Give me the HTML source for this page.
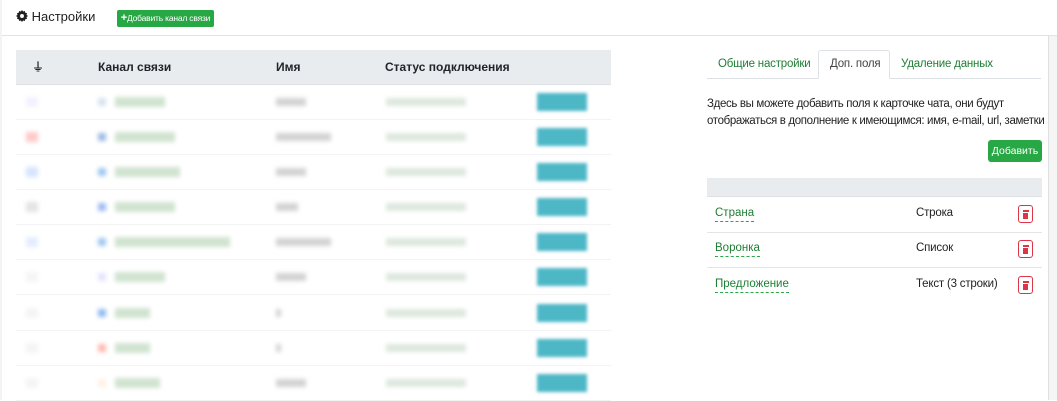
<!DOCTYPE html>
<html><head><meta charset="utf-8"><style>
*{box-sizing:border-box;margin:0;padding:0}
body{width:1057px;height:400px;overflow:hidden;background:#fff;font-family:"Liberation Sans","Noto Sans CJK SC",sans-serif;font-size:12px;color:#212529;position:relative;white-space:nowrap}
.abs{position:absolute}
.b{position:absolute;filter:blur(2px);opacity:.8}
</style></head><body>
<div class="abs" style="left:0;top:0;width:1057px;height:36px;border-bottom:1px solid #e3e3e3"></div>
<div class="abs" style="left:0;top:0;width:2px;height:400px;background:#f3f3f3"></div>
<div class="abs" style="left:1048px;top:36px;width:9px;height:364px;background:#f5f5f5;border-left:1px solid #e0e0e0"></div>
<div class="abs" style="left:16px;top:9px;font-size:13px;color:#222"><svg width="12" height="12" viewBox="0 0 16 16" style="vertical-align:-1px"><path fill="#222" d="M8 0l1.5 2 2.3-.7.6 2.3 2.3.6-.7 2.3L16 8l-2 1.5.7 2.3-2.3.6-.6 2.3-2.3-.7L8 16l-1.5-2-2.3.7-.6-2.3-2.3-.6.7-2.3L0 8l2-1.5-.7-2.3 2.3-.6.6-2.3 2.3.7z"/><circle cx="8" cy="8" r="2.6" fill="#fff"/></svg> Настройки</div>
<div class="abs" style="left:117px;top:10px;width:97px;height:17px;background:#28a745;border-radius:2px;color:#fff;font-size:8.5px;line-height:17px;text-align:center;letter-spacing:-0.2px"><b style="font-size:11px">+</b>Добавить канал связи</div>

<div class="abs" style="left:16px;top:50px;width:595px;height:35px;background:#e9ecef;border-bottom:1px solid #dee2e6;font-weight:bold;font-size:12px;line-height:35px">
<span class="abs" style="left:16px;top:0;font-size:12px">⏚</span>
<span class="abs" style="left:82px">Канал связи</span>
<span class="abs" style="left:260px">Имя</span>
<span class="abs" style="left:369px">Статус подключения</span>
</div>
<div id="rows"></div>
<script>
var ys=[102,137,172,207,242,277,313,348,383],ic=['#eef','#fbb','#cdf','#ddd','#dde8ff','#f2f2f2','#f2f2f2','#f2f2f2','#f2f2f2'],ci=['#cde','#8ad','#8be','#8ae','#8be','#ddf','#7ae','#fa9','#fed'],w=[50,60,65,60,115,50,35,35,45],nm=[30,55,30,22,55,30,5,5,30];
var h='';ys.forEach(function(y,i){
h+='<div class="abs" style="left:16px;top:'+(y+17)+'px;width:595px;height:1px;background:#f3f3f3"></div>';
h+='<div class="b" style="left:26px;top:'+(y-5)+'px;width:12px;height:10px;background:'+ic[i]+'"></div>';
h+='<div class="b" style="left:98px;top:'+(y-4)+'px;width:8px;height:8px;background:'+ci[i]+'"></div>';
h+='<div class="b" style="left:115px;top:'+(y-5)+'px;width:'+w[i]+'px;height:10px;background:#c5dcc5"></div>';
h+='<div class="b" style="left:276px;top:'+(y-4)+'px;width:'+nm[i]+'px;height:8px;background:#c8c8c8"></div>';
h+='<div class="b" style="left:386px;top:'+(y-4)+'px;width:80px;height:8px;background:#d5e2d5"></div>';
h+='<div class="b" style="left:537px;top:'+(y-9)+'px;width:50px;height:18px;background:#3ab0c0;filter:blur(1.5px);opacity:.9"></div>';
});document.getElementById('rows').innerHTML=h;
</script>

<div class="abs" style="left:707px;top:78px;width:334px;height:1px;background:#dee2e6"></div>
<div class="abs" style="left:818px;top:50px;width:72px;height:29px;border:1px solid #dee2e6;border-bottom:1px solid #fff;background:#fff;border-radius:3px 3px 0 0"></div>
<div class="abs" style="left:718px;top:58px;color:#1e7e34;font-size:11.5px;letter-spacing:-0.2px">Общие настройки</div>
<div class="abs" style="left:830px;top:58px;color:#444;font-size:11.5px;letter-spacing:-0.2px">Доп. поля</div>
<div class="abs" style="left:901px;top:58px;color:#1e7e34;font-size:11.5px;letter-spacing:-0.2px">Удаление данных</div>
<div class="abs" style="left:707px;top:96px;line-height:17px;font-size:11.5px;letter-spacing:-0.35px;color:#222">Здесь вы можете добавить поля к карточке чата, они будут<br>отображаться в дополнение к имеющимся: имя, e-mail, url, заметки</div>
<div class="abs" style="left:988px;top:140px;width:54px;height:22px;background:#28a745;border-radius:3px;color:#fff;font-size:10.5px;line-height:22px;text-align:center">Добавить</div>
<div class="abs" style="left:707px;top:178px;width:335px;height:19px;background:#e9ecef;border-bottom:1px solid #dee2e6"></div>
<div class="abs" style="left:707px;top:232px;width:335px;height:1px;background:#e5e5e5"></div>
<div class="abs" style="left:707px;top:267px;width:335px;height:1px;background:#e5e5e5"></div>
<div id="f"></div>
<script>
var r=[['Страна','Строка',214],['Воронка','Список',249],['Предложение','Текст (3 строки)',285]],s='';
r.forEach(function(a){s+='<div class="abs" style="left:715px;top:'+(a[2]-8)+'px;color:#1e7e34;border-bottom:1px dashed #28a745;line-height:15px;font-size:11.5px">'+a[0]+'</div><div class="abs" style="left:916px;top:'+(a[2]-7)+'px;color:#222;font-size:11.5px;letter-spacing:-0.2px">'+a[1]+'</div><div class="abs" style="left:1018px;top:'+(a[2]-9)+'px;width:15px;height:18px;border:1px solid #dc3545;border-radius:3px"><div style="position:absolute;left:3.5px;top:4px;width:6px;height:1.5px;background:#dc3545"></div><div style="position:absolute;left:4px;top:6.5px;width:5px;height:6px;background:#dc3545"></div></div>';});
document.getElementById('f').innerHTML=s;
</script>
</body></html>
